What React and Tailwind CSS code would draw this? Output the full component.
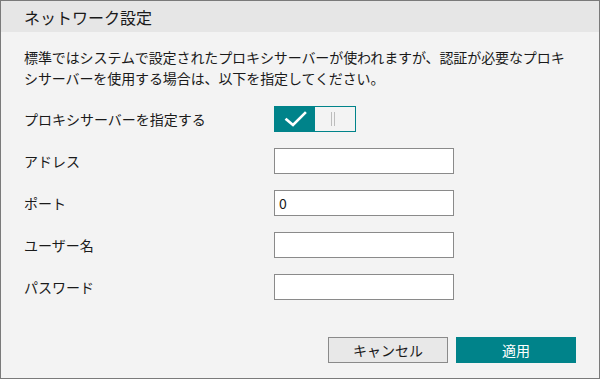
import { useState } from 'react';

const font = { fontFamily: '"Noto Sans CJK JP", "Noto Sans", sans-serif' };

function Field({ label, value = '' }) {
  return (
    <div className="flex items-center h-[26px]">
      <span className="w-[250px] text-[14px] text-[#1a1a1a]">{label}</span>
      <input
        defaultValue={value}
        className="w-[180px] h-[26px] border border-[#8a8a8a] bg-white px-[4px] text-[14px] text-[#1a1a1a] outline-none"
      />
    </div>
  );
}

export default function App() {
  const [on, setOn] = useState(true);

  return (
    <div
      className="w-[600px] h-[379px] border border-[#7a7a7a] bg-[#f3f3f3] flex flex-col overflow-hidden"
      style={font}
    >
      {/* Title bar */}
      <div className="h-[31px] bg-[#e6e6e6] flex items-center pl-[23px] shrink-0">
        <span className="text-[16px] text-[#1a1a1a] leading-none">ネットワーク設定</span>
      </div>

      <div className="flex flex-col px-[23px] flex-1">
        <p className="mt-[15px] text-[14px] leading-[21px] text-[#1a1a1a] tracking-[-0.1px]">
          標準ではシステムで設定されたプロキシサーバーが使われますが、認証が必要なプロキシサーバーを使用する場合は、以下を指定してください。
        </p>

        <div className="mt-[17px] flex flex-col gap-4">
          <div className="flex items-center h-[26px]">
            <span className="w-[250px] text-[14px] text-[#1a1a1a]">プロキシサーバーを指定する</span>
            <button
              onClick={() => setOn(!on)}
              className="w-[82px] h-[26px] border border-[#00838a] flex"
            >
              <span className="w-[40px] h-full bg-[#00838a] flex items-center justify-center">
                <svg width="24" height="16" viewBox="0 0 24 16" fill="none">
                  <polyline
                    points="3.5,8.5 10,14 22,2"
                    stroke="white"
                    strokeWidth="2.6"
                    strokeLinecap="square"
                  />
                </svg>
              </span>
              <span className="flex-1 h-full bg-[#f3f3f3] flex items-center justify-center gap-[2px] pr-[4px]">
                <span className="w-px h-[14px] bg-[#bdbdbd]" />
                <span className="w-px h-[14px] bg-[#bdbdbd]" />
              </span>
            </button>
          </div>
          <Field label="アドレス" />
          <Field label="ポート" value="0" />
          <Field label="ユーザー名" />
          <Field label="パスワード" />
        </div>

        <div className="mt-[37px] flex justify-end gap-2">
          <button className="w-[120px] h-[26px] border border-[#8a8a8a] bg-[#e8e8e8] text-[14px] text-[#1a1a1a]">
            キャンセル
          </button>
          <button className="w-[120px] h-[26px] bg-[#00838a] text-[14px] text-white">
            適用
          </button>
        </div>
      </div>
    </div>
  );
}
